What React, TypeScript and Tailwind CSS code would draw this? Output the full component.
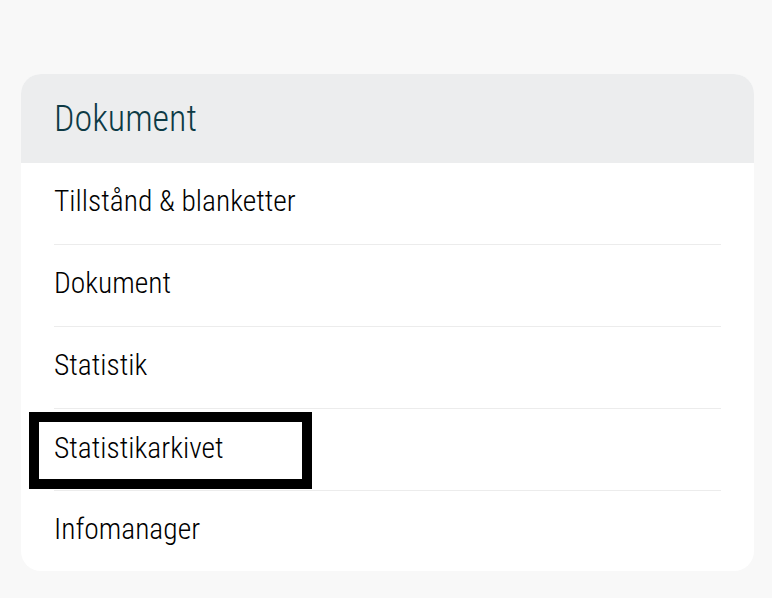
const links = [
  'Tillstånd & blanketter',
  'Dokument',
  'Statistik',
  'Statistikarkivet',
  'Infomanager',
];

// the focused link gets the thick keyboard outline
const focused = 'Statistikarkivet';

export default function App() {
  return (
    <div className="min-h-[598px] w-full bg-[#f8f8f8] pt-[74px] pl-[21px] pr-[18px] font-['Roboto_Condensed',Roboto,sans-serif]">
      <nav className="w-[733px] overflow-hidden rounded-[20px] bg-white">
        <h2 className="flex h-[89px] items-center bg-[#ecedee] pl-[33px] text-[36px] font-light text-[#0d3a45]">
          Dokument
        </h2>
        <ul className="px-[33px]">
          {links.map((label, i) => (
            <li
              key={label}
              className={`flex items-center ${i < links.length - 1 ? 'h-[82px] border-b border-[#ececec]' : 'h-[80px]'}`}
            >
              <a
                href="#"
                className={
                  label === focused
                    ? '-ml-[15px] mt-[2px] flex h-[57px] w-[263px] items-center pl-[15px] pb-[4px] text-[29.5px] font-light text-black outline-[10px] outline-solid outline-black'
                    : 'mb-[4px] text-[29.5px] font-light text-black'
                }
              >
                {label}
              </a>
            </li>
          ))}
        </ul>
      </nav>
    </div>
  );
}
